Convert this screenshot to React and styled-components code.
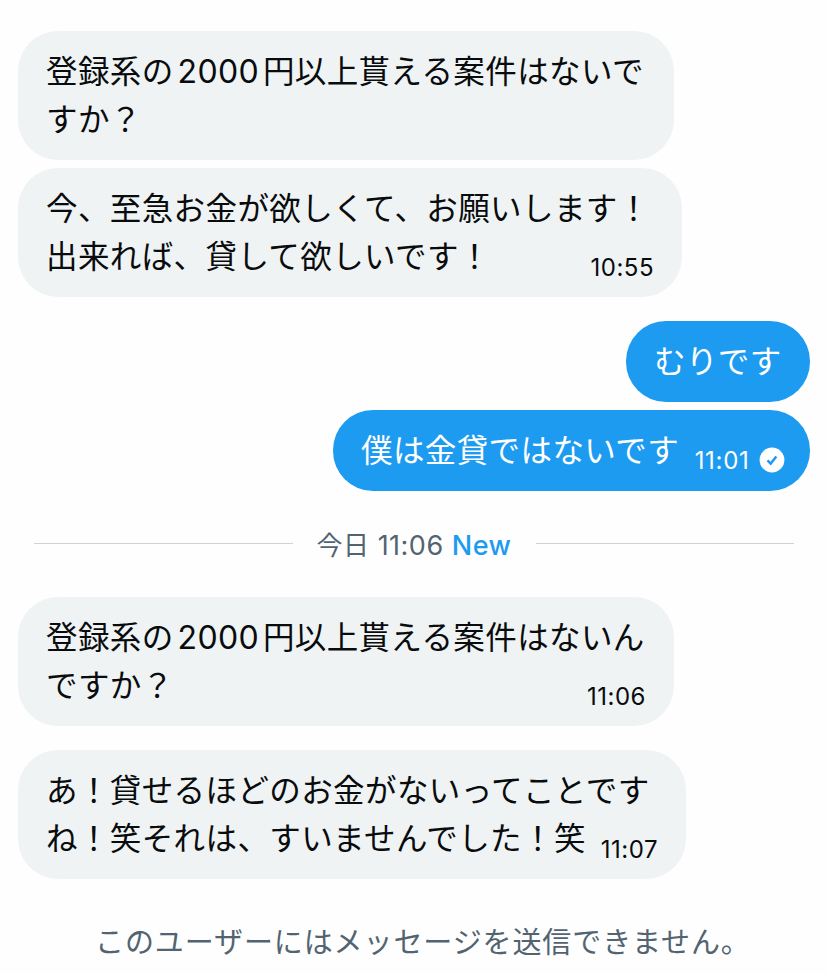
import React from "react";
import styled, { createGlobalStyle } from "styled-components";

const conversation = [
  {
    gap: 0,
    width: 656,
    lines: ["登録系の{2000}円以上貰える案件はないで", "すか？"],
  },
  {
    gap: 8.5,
    width: 664,
    lines: ["今、至急お金が欲しくて、お願いします！", "出来れば、貸して欲しいです！"],
    time: "10:55",
  },
  { gap: 24.5, width: 184, mine: true, lines: ["むりです"] },
  {
    gap: 8.5,
    width: 477,
    mine: true,
    lines: ["僕は金貸ではないです"],
    time: "11:01",
  },
];

const newMessages = [
  {
    gap: 0,
    width: 656,
    lines: ["登録系の{2000}円以上貰える案件はないん", "ですか？"],
    time: "11:06",
  },
  {
    gap: 24.5,
    width: 668,
    lines: ["あ！貸せるほどのお金がないってことです", "ね！笑それは、すいませんでした！笑"],
    time: "11:07",
  },
];

// {…} marks digits that get a little air on both sides
const renderLine = (line) =>
  line
    .split(/[{}]/)
    .map((part, i) => (i % 2 ? <Digits key={i}>{part}</Digits> : part));

const Message = ({ message }) => (
  <Bubble $mine={message.mine} $width={message.width} $gap={message.gap}>
    {message.lines.map((line, i) => (
      <Line key={line}>
        <Text>{renderLine(line)}</Text>
        {message.time && i === message.lines.length - 1 && (
          <Time $mine={message.mine}>
            {message.time}
            {message.mine && (
              <Check viewBox="0 0 26 26">
                <circle cx="13" cy="13" r="12.4" fill="#fff" />
                <path
                  d="M8.5 13.4l3.2 3.2 5.6-7.2"
                  fill="none"
                  stroke="#1d9bf0"
                  strokeWidth="2.5"
                />
              </Check>
            )}
          </Time>
        )}
      </Line>
    ))}
  </Bubble>
);

const App = () => (
  <>
    <GlobalStyle />
    <Screen>
      {conversation.map((m, i) => (
        <Message key={i} message={m} />
      ))}
      <Separator>
        <Rule />
        <DateLabel>
          <Day>今日</Day> 11:06 <New>New</New>
        </DateLabel>
        <Rule />
      </Separator>
      {newMessages.map((m, i) => (
        <Message key={i} message={m} />
      ))}
      <Notice>このユーザーにはメッセージを送信できません。</Notice>
    </Screen>
  </>
);

const GlobalStyle = createGlobalStyle`
  body {
    margin: 0;
    background: #fefefe;
    font-family: Inter, "Noto Sans CJK JP", sans-serif;
  }
`;

const Screen = styled.main`
  box-sizing: border-box;
  width: 828px;
  height: 974px;
  padding: 31px 18px 0;
  display: flex;
  flex-direction: column;
  align-items: flex-start;
  overflow: hidden;
`;

const Bubble = styled.div`
  box-sizing: border-box;
  flex-shrink: 0;
  width: ${(props) => props.$width}px;
  margin-top: ${(props) => props.$gap}px;
  padding: 16.5px 28px 16px;
  border-radius: 40px;
  align-self: ${(props) => (props.$mine ? "flex-end" : "flex-start")};
  color: ${(props) => (props.$mine ? "#fff" : "#090b0d")};
  background: ${(props) => (props.$mine ? "#1d9bf0" : "#eff3f4")};
`;

const Line = styled.div`
  display: flex;
  justify-content: space-between;
  align-items: flex-end;
  height: 48px;
  white-space: nowrap;
`;

const Text = styled.span`
  font-size: 31.5px;
  letter-spacing: 0.4px;
  line-height: 49px;
`;

const Digits = styled.span`
  margin: 0 4px;
  font-size: 32px;
  letter-spacing: 0.3px;
`;

const Time = styled.span`
  display: flex;
  align-items: center;
  margin-right: ${(props) => (props.$mine ? -3 : 0)}px;
  font-size: 24px;
  letter-spacing: ${(props) => (props.$mine ? 0.7 : 0.5)}px;
  line-height: 26px;
`;

const Check = styled.svg`
  width: 26px;
  height: 26px;
  margin: 0 0 2px 9.5px;
`;

const Separator = styled.div`
  display: flex;
  align-items: center;
  align-self: stretch;
  flex-shrink: 0;
  height: 106.5px;
  padding: 0 16px;
`;

const Rule = styled.div`
  flex: 1;
  height: 1px;
  background: #cfd3d6;
`;

const DateLabel = styled.div`
  width: 243px;
  text-align: center;
  white-space: nowrap;
  font-size: 27px;
  letter-spacing: 0.5px;
  color: #536471;
`;

const Day = styled.span`
  font-size: 26px;
`;

const New = styled.span`
  font-weight: 500;
  color: #1d9bf0;
`;

const Notice = styled.p`
  margin: 42px 0 0 77px;
  font-size: 29px;
  line-height: 44px;
  letter-spacing: 0.9px;
  white-space: nowrap;
  color: #536471;
`;

export default App;
